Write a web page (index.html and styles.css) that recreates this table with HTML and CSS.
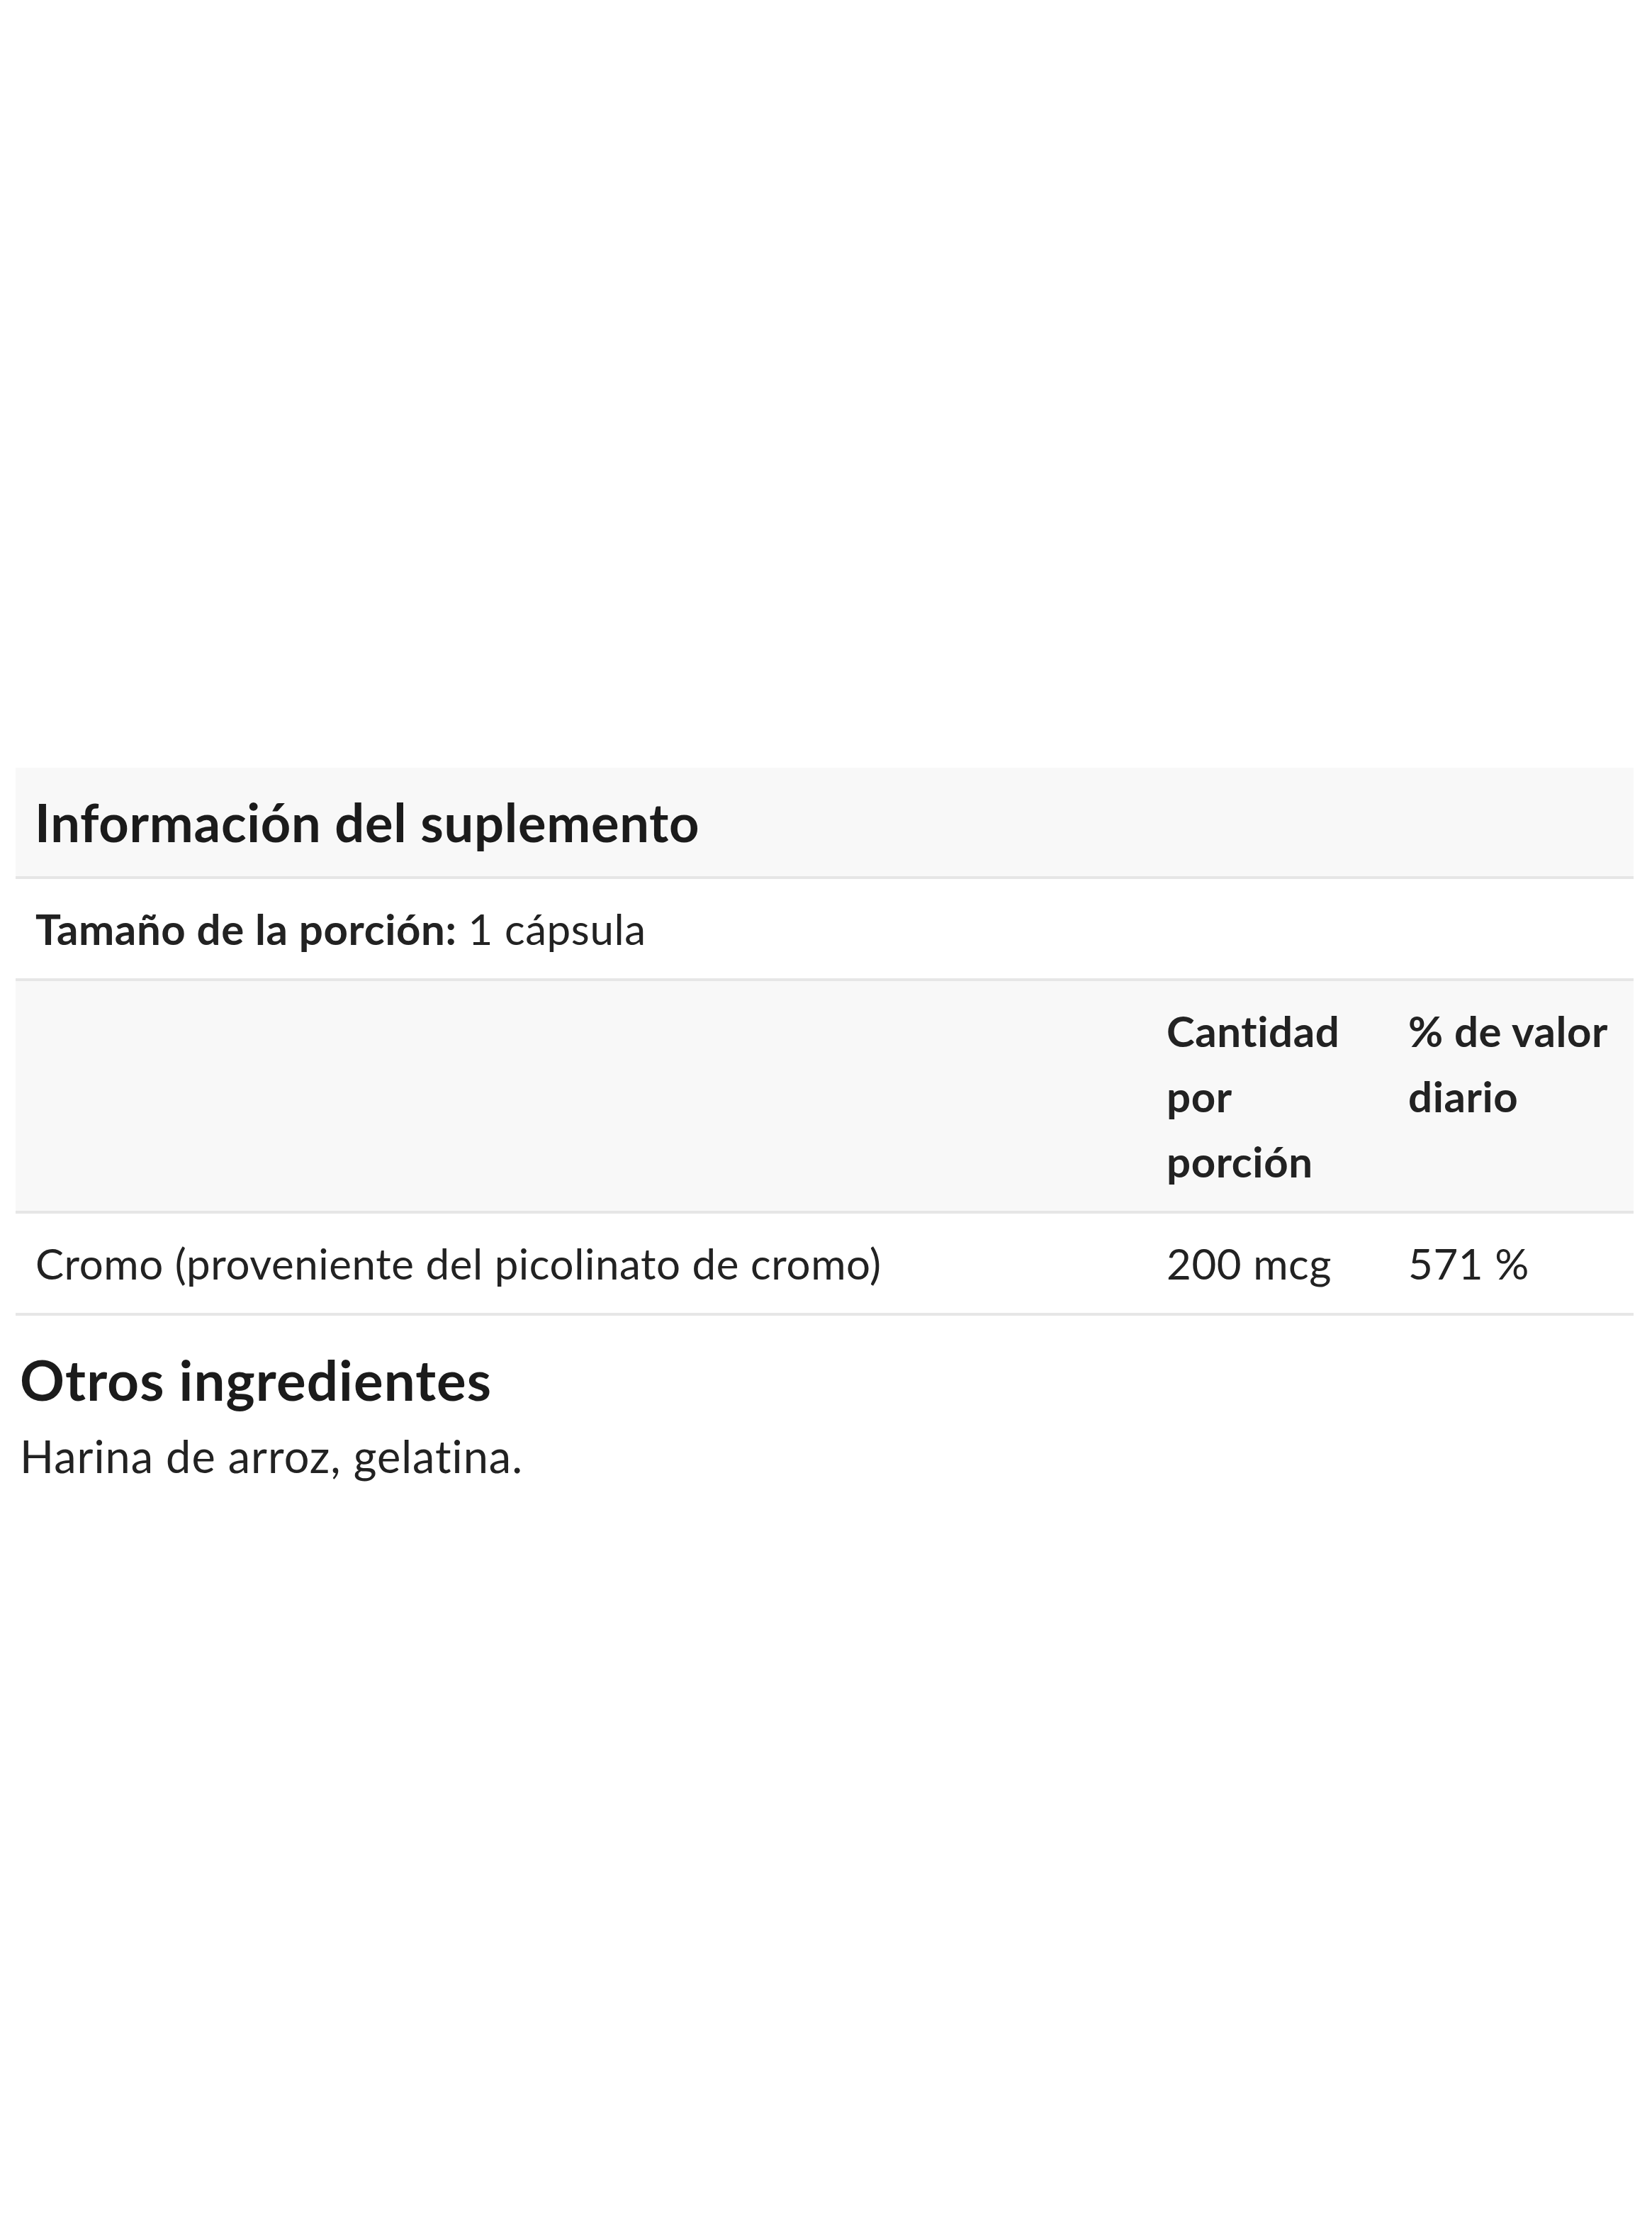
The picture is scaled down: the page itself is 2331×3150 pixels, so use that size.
FILE: index.html
```html
<!doctype html>
<html>
	<head>
		<title>Información del suplemento</title>
		<meta charset="utf8">
		<link rel="stylesheet" href="styles.css">
	</head>
	<body>
		<section class="supplement">
			<table class="facts">
				<colgroup>
					<col>
					<col class="col-amount">
					<col class="col-daily">
				</colgroup>
				<thead>
					<tr class="facts-title">
						<th colspan="3">Información del suplemento</th>
					</tr>
					<tr class="facts-serving">
						<td colspan="3"><strong>Tamaño de la porción:</strong> 1 cápsula</td>
					</tr>
					<tr class="facts-head">
						<th></th>
						<th>Cantidad por porción</th>
						<th>% de valor diario</th>
					</tr>
				</thead>
				<tbody>
					<tr>
						<td>Cromo (proveniente del picolinato de cromo)</td>
						<td>200 mcg</td>
						<td>571 %</td>
					</tr>
				</tbody>
			</table>
		</section>
		<section class="other">
			<h2>Otros ingredientes</h2>
			<p>Harina de arroz, gelatina.</p>
		</section>
	</body>
</html>
```

FILE: styles.css
```css
html, body {
	margin: 0;
	padding: 0;
	background: #fff;
	color: #222;
}
body {
	font-family: Lato, "Open Sans", sans-serif;
	font-size: 60px;
	font-variant-ligatures: none;
	padding-top: 1083px;
}
.supplement {
	padding: 0 26px 0 22px;
}
.facts {
	width: 100%;
	border-collapse: collapse;
	table-layout: fixed;
}
.col-amount {
	width: 341px;
}
.col-daily {
	width: 346px;
}
.facts th, .facts td {
	text-align: left;
	vertical-align: top;
	padding: 24px 28px;
	line-height: 92px;
	letter-spacing: 0.6px;
	border-bottom: 4px solid #e6e6e6;
}
.facts th {
	font-weight: 700;
}
.facts-title th {
	background: #f8f8f8;
	font-size: 74px;
	line-height: 101px;
	letter-spacing: 0.75px;
	padding: 26px 27px;
	color: #1b1b1b;
}
.facts-head th {
	background: #f8f8f8;
}
.facts strong {
	font-weight: 700;
}
.other {
	padding: 0 28px;
}
.other h2 {
	margin: 45px 0 0;
	font-size: 78px;
	line-height: 91px;
	letter-spacing: 1.1px;
	font-weight: 700;
	color: #1b1b1b;
}
.other p {
	margin: 15px 0 0;
	font-size: 63px;
	line-height: 93px;
	letter-spacing: 1px;
}
```
